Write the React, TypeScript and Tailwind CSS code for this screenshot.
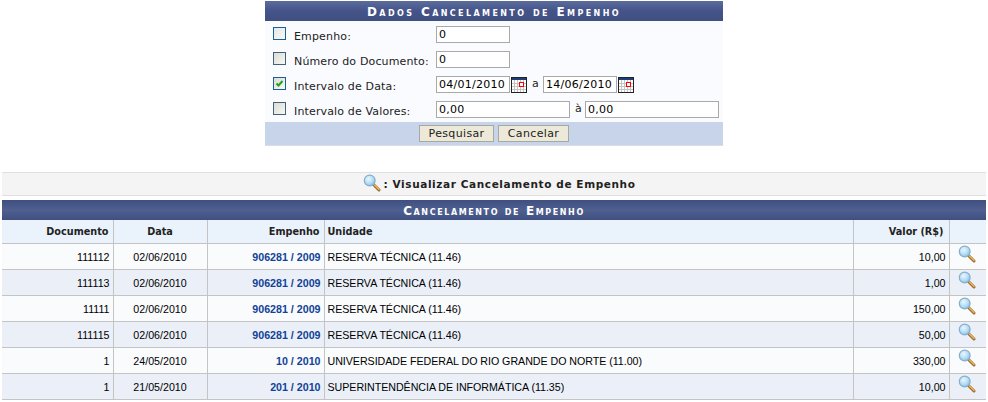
import React from "react";

const Mag = ({ className = "" }: { className?: string }) => (
  <svg width="18" height="18" viewBox="0 0 18 18" className={`shrink-0 ${className}`}>
    <defs>
      <radialGradient id="lens" cx="0.4" cy="0.35" r="0.7">
        <stop offset="0" stopColor="#eaf6fd" />
        <stop offset="0.6" stopColor="#b4dcf5" />
        <stop offset="1" stopColor="#7cbae4" />
      </radialGradient>
    </defs>
    <path d="M10.5 10.5 L16 16" stroke="#9a6a2c" strokeWidth="3" strokeLinecap="round" />
    <path d="M11.5 11 L16 15.5" stroke="#f0b35c" strokeWidth="1.4" strokeLinecap="round" />
    <circle cx="6.7" cy="6.5" r="5.4" fill="url(#lens)" stroke="#86aecb" strokeWidth="1.2" />
  </svg>
);

const Cal = () => (
  <svg width="16" height="16" viewBox="0 0 16 16" className="shrink-0">
    <rect x="0.5" y="0.5" width="15" height="15" fill="#fff" stroke="#222" />
    <rect x="1" y="1" width="14" height="2" fill="#1f3f7c" />
    <path d="M1 6.5h14M1 9.5h14M1 12.5h14M3.5 3v12M6.5 3v12M9.5 3v12M12.5 3v12" stroke="#c4c4c4" strokeWidth="1" />
    <rect x="8.5" y="5.5" width="4" height="4" fill="#fff" stroke="#ff0000" />
  </svg>
);

const Box = ({ checked, blue }: { checked?: boolean; blue?: boolean }) => (
  <span
    className={`relative block w-[13px] h-[13px] border ${blue || checked ? "border-[#1a5f96]" : "border-[#45607a]"} bg-gradient-to-br ${blue ? "from-[#e4e8ec]" : "from-[#dcdcd6]"} to-[#f8f8f4] shrink-0`}
  >
    {checked && (
      <svg width="11" height="11" viewBox="0 0 11 11" className="absolute left-0 top-0">
        <path d="M2.5 5.5 L4.5 7.5 L8.5 3" stroke="#21a121" strokeWidth="2" fill="none" />
      </svg>
    )}
  </span>
);

const Input = ({ value, w }: { value: string; w: string }) => (
  <span className={`block ${w} h-[17px] leading-[15px] border border-[#a9a9a9] bg-white pl-[2px] tracking-[0.25px] text-black shrink-0`}>{value}</span>
);

const FormRow = ({ label, checked, blue, children }: { label: string; checked?: boolean; blue?: boolean; children: React.ReactNode }) => (
  <div className="flex items-center h-[25px] pl-[8px]">
    <span className="w-[21px] -mt-[3px]"><Box checked={checked} blue={blue} /></span>
    <span className="w-[142px] text-[#222] pt-[5px] tracking-[0.15px]">{label}</span>
    <div className="flex items-center">{children}</div>
  </div>
);

const rows = [
  ["111112", "02/06/2010", "906281 / 2009", "RESERVA TÉCNICA (11.46)", "10,00"],
  ["111113", "02/06/2010", "906281 / 2009", "RESERVA TÉCNICA (11.46)", "1,00"],
  ["11111", "02/06/2010", "906281 / 2009", "RESERVA TÉCNICA (11.46)", "150,00"],
  ["111115", "02/06/2010", "906281 / 2009", "RESERVA TÉCNICA (11.46)", "50,00"],
  ["1", "24/05/2010", "10 / 2010", "UNIVERSIDADE FEDERAL DO RIO GRANDE DO NORTE (11.00)", "330,00"],
  ["1", "21/05/2010", "201 / 2010", "SUPERINTENDÊNCIA DE INFORMÁTICA (11.35)", "10,00"],
];

const dv = "font-['DejaVu_Sans',sans-serif]";
const th = `border-r border-[#c4c4c4] pt-[2px] font-bold text-[9.7px] text-[#222] ${dv}`;
const td = "border-r border-b border-[#c4c4c4] px-[3px] pt-[2px]";

export default function App() {
  return (
    <div className="w-[988px] h-[402px] bg-white overflow-hidden font-['Liberation_Sans',sans-serif] text-black">
      <div className={`w-[458px] mx-auto mt-px bg-[#fafbfe] text-[11px] tracking-[0.35px] ${dv}`}>
        <div className="h-[20px] leading-[22px] text-center text-white font-bold text-[12px] tracking-[2.4px] [font-variant:small-caps] bg-gradient-to-b from-[#5b6c9c] via-[#44548a] to-[#3f4f7f]">
          Dados Cancelamento de Empenho
        </div>
        <div className="pt-[1px] h-[101px]">
          <FormRow label="Empenho:" blue><Input value="0" w="w-[74px]" /></FormRow>
          <FormRow label="Número do Documento:"><Input value="0" w="w-[74px]" /></FormRow>
          <FormRow label="Intervalo de Data:" checked>
            <Input value="04/01/2010" w="w-[74px]" />
            <span className="ml-px"><Cal /></span>
            <span className="ml-[5px] mr-[4px] text-[#222]">a</span>
            <Input value="14/06/2010" w="w-[74px]" />
            <span className="ml-px"><Cal /></span>
          </FormRow>
          <FormRow label="Intervalo de Valores:">
            <Input value="0,00" w="w-[134px]" />
            <span className="ml-[5px] mr-[3px] text-[#222]">à</span>
            <Input value="0,00" w="w-[134px]" />
          </FormRow>
        </div>
        <div className="h-[24px] bg-[#c8d4ea] border-b border-[#d8dde8] flex items-center justify-center gap-[4px]">
          <span className="w-[75px] h-[17px] leading-[15px] text-center border border-[#a8a8a0] bg-[#ece9d8] text-[#222]">Pesquisar</span>
          <span className="w-[71px] h-[17px] leading-[15px] text-center border border-[#a8a8a0] bg-[#ece9d8] text-[#222]">Cancelar</span>
        </div>
      </div>

      <div className="mx-[2px] mt-[26px]">
        <div className={`h-[24px] pl-[10px] bg-[#f4f4f4] border-y border-[#e0e0e0] flex items-center justify-center text-[10.5px] font-bold tracking-[0.6px] text-[#222] ${dv}`}>
          <Mag className="mr-[3px] -mt-[2px]" />
          <span className="pt-[2px]">: Visualizar Cancelamento de Empenho</span>
        </div>
        <div className={`mt-[4px] h-[20px] leading-[22px] text-center text-white font-bold text-[12px] tracking-[1.6px] [font-variant:small-caps] bg-gradient-to-b from-[#3f4f80] via-[#4f6090] to-[#3f4f80] ${dv}`}>
          Cancelamento de Empenho
        </div>
        <table className="w-[984px] table-fixed border-collapse text-[10.67px]">
          <colgroup>
            <col className="w-[111px]" />
            <col className="w-[94px]" />
            <col className="w-[117px]" />
            <col className="w-[529px]" />
            <col className="w-[96px]" />
            <col className="w-[37px]" />
          </colgroup>
          <thead>
            <tr className="h-[23px] bg-[#eaf2fc] border-b border-[#c4c4c4]">
              <th className={`${th} text-right px-[4px]`}>Documento</th>
              <th className={`${th} text-center px-[4px]`}>Data</th>
              <th className={`${th} text-right px-[4px]`}>Empenho</th>
              <th className={`${th} text-left px-[3px]`}>Unidade</th>
              <th className={`${th} text-right px-[5px]`}>Valor (R$)</th>
              <th className="" />
            </tr>
          </thead>
          <tbody>
            {rows.map((r, i) => (
              <tr key={i} className={`h-[26px] ${i % 2 === 0 ? "bg-[#f9fbfd]" : "bg-[#ebf0f8]"}`}>
                <td className={`${td} text-right`}>{r[0]}</td>
                <td className={`${td} text-center`}>{r[1]}</td>
                <td className={`${td} text-right font-bold text-[#124297]`}>{r[2]}</td>
                <td className={`${td} text-left tracking-[-0.03px]`}>{r[3]}</td>
                <td className={`${td} text-right`}>{r[4]}</td>
                <td className="border-b border-[#c4c4c4] p-0">
                  <div className="flex justify-center -mt-[4px] pr-[2px]"><Mag /></div>
                </td>
              </tr>
            ))}
          </tbody>
        </table>
      </div>
    </div>
  );
}
